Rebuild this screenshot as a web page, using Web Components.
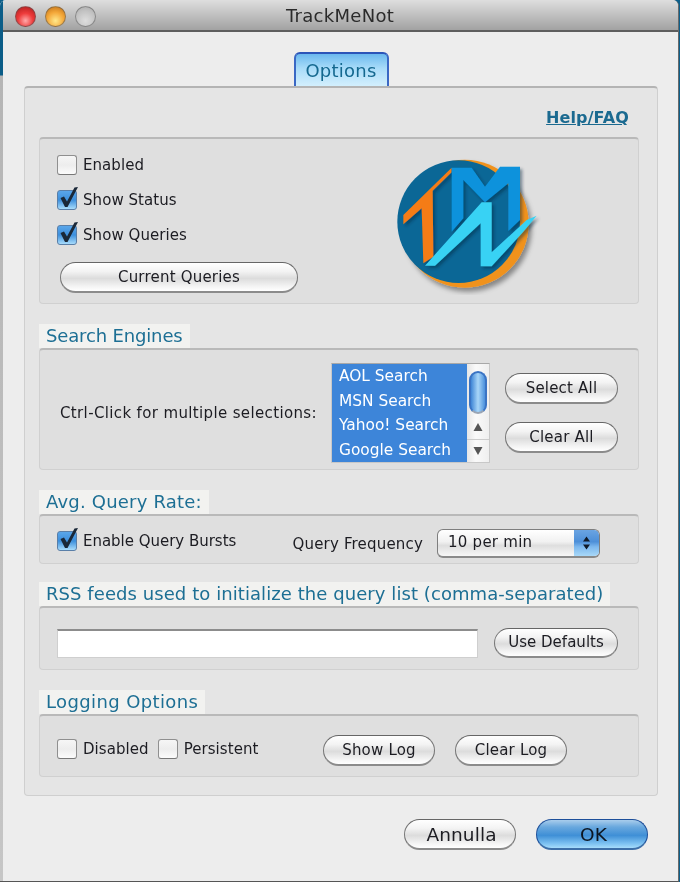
<!DOCTYPE html>
<html><head><meta charset="utf-8">
<style>
html,body{margin:0;padding:0;width:680px;height:882px;overflow:hidden;background:#0d5f8a}
body{font-family:"DejaVu Sans",sans-serif;color:#1c1c22}
</style></head><body>
<tm-window title="TrackMeNot">
  <tm-tab>Options</tm-tab>
  <tm-panel>
    <tm-help>Help/FAQ</tm-help>
    <tm-group pad="13px 18px 12px 17px">
      <tm-row justify="space-between">
        <tm-stack>
          <tm-check>Enabled</tm-check>
          <tm-check checked>Show Status</tm-check>
          <tm-check checked>Show Queries</tm-check>
          <tm-button width="238" style="margin:3px 0 0 3px">Current Queries</tm-button>
        </tm-stack>
        <tm-logo></tm-logo>
      </tm-row>
    </tm-group>
    <tm-group label="Search Engines" ls="-.15" pad="13px 20px 6px 20px" gap="20">
      <tm-row justify="space-between">
        <tm-text style="letter-spacing:.36px">Ctrl-Click for multiple selections:</tm-text>
        <tm-row gap="15">
          <tm-listbox>
            <tm-option>AOL Search</tm-option>
            <tm-option>MSN Search</tm-option>
            <tm-option>Yahoo! Search</tm-option>
            <tm-option>Google Search</tm-option>
          </tm-listbox>
          <tm-stack gap="18">
            <tm-button width="113">Select All</tm-button>
            <tm-button width="113">Clear All</tm-button>
          </tm-stack>
        </tm-row>
      </tm-row>
    </tm-group>
    <tm-group label="Avg. Query Rate:" ls=".2" pad="13px 38px 6px 17px" gap="20">
      <tm-row justify="space-between">
        <tm-check checked style="align-self:flex-start;margin-top:1px;letter-spacing:-.02px">Enable Query Bursts</tm-check>
        <tm-row gap="14">
          <tm-text style="letter-spacing:.18px">Query Frequency</tm-text>
          <tm-select>10 per min</tm-select>
        </tm-row>
      </tm-row>
    </tm-group>
    <tm-group label="RSS feeds used to initialize the query list (comma-separated)" ls=".07" pad="20px 20px 13px 17px" gap="18">
      <tm-row gap="16">
        <tm-input></tm-input>
        <tm-button width="124" style="height:30px;line-height:27px;letter-spacing:.02px">Use Defaults</tm-button>
      </tm-row>
    </tm-group>
    <tm-group label="Logging Options" ls=".38" pad="19px 18px 13px 17px" gap="20">
      <tm-row justify="space-between" style="width:510px">
        <tm-row gap="9" style="margin-bottom:3px">
          <tm-check>Disabled</tm-check>
          <tm-check>Persistent</tm-check>
        </tm-row>
        <tm-row gap="20">
          <tm-button width="112">Show Log</tm-button>
          <tm-button width="112">Clear Log</tm-button>
        </tm-row>
      </tm-row>
    </tm-group>
  </tm-panel>
  <tm-row slot="footer" gap="20">
    <tm-button width="112" size="big">Annulla</tm-button>
    <tm-button width="112" size="big" primary>OK</tm-button>
  </tm-row>
</tm-window>

<script>
function def(name, css, html){
  customElements.define(name, class extends HTMLElement{
    constructor(){super();this.attachShadow({mode:'open'});}
    connectedCallback(){
      const h = typeof html==='function'?html(this):html;
      this.shadowRoot.innerHTML='<style>'+css+'</style>'+h;
    }
  });
}
def('tm-window',`
  :host{display:flex;flex-direction:column;width:678px;height:881px;background:#ededed;border-right:1px solid #6a6a6a;border-bottom:1px solid #555;position:relative;border-radius:6px 6px 0 0;overflow:hidden;filter:blur(.35px)}
  .bar{flex:none;height:30px;display:flex;align-items:center;background:linear-gradient(#dedede,#c9c9c9 35%,#a2a2a2);border-bottom:2px solid #5e5e5e;position:relative}
  .dots{display:flex;gap:9px;padding:2px 0 0 15px;align-items:center}
  .dot{width:21px;height:21px;border-radius:50%;box-sizing:border-box;border:1px solid rgba(90,90,90,.55)}
  .r{background:radial-gradient(circle at 50% 72%,#ffa9a9 0,#ee3b3b 45%,#a81a1a 100%)}
  .o{background:radial-gradient(circle at 50% 72%,#ffe88c 0,#f4a83a 50%,#bd6c12 100%)}
  .g{background:radial-gradient(circle at 50% 72%,#dedede 0,#c2c2c2 60%,#a8a8a8 100%)}
  .t{position:absolute;left:0;right:0;text-align:center;font-size:18px;color:#2b2b2b;letter-spacing:.3px;top:5px;padding-left:2px}
  .body{flex:1;display:flex;flex-direction:column;align-items:center;padding:20px 20px 0 24px;min-height:0}
  .foot{flex:none;display:flex;justify-content:flex-end;padding:0 30px 31px 0;background:#ededed}
  .edge{position:absolute;left:0;top:0;bottom:0;width:3px;background:linear-gradient(#0b5d88 0,#0b5d88 75px,#b5b5b5 76px,#c6c6c6 100%)}
  ::slotted(tm-panel){align-self:stretch}
`,t=>`<div class="bar"><div class="dots"><div class="dot r"></div><div class="dot o"></div><div class="dot g"></div></div><div class="t">${t.getAttribute('title')}</div></div>
<div class="body"><slot></slot></div><div class="foot"><slot name="footer"></slot></div><div class="edge"></div>`);

def('tm-tab',`
  :host{display:block;flex:none;width:95px;height:34px;box-sizing:border-box;border:2px solid #3a68c4;border-bottom:0;border-radius:6px 6px 0 0;background:linear-gradient(#6bb9ee,#a9dcf9 45%,#d3effd);color:#14688f;font-size:18px;text-align:center;line-height:33px;letter-spacing:.25px;border-top-color:#2b55b8}
`,`<slot></slot>`);

def('tm-panel',`
  :host{display:flex;flex-direction:column;box-sizing:border-box;height:711px;background:#e5e5e5;border:1px solid #cfcfcf;border-top:2px solid #b4b4b4;border-radius:4px;padding:0 18px 0 14px;margin-bottom:23px}
`,`<slot></slot>`);

def('tm-help',`
  :host{display:block;text-align:right;font-size:16px;font-weight:700;color:#1b6a90;text-decoration:underline;padding:20px 10px 0 0;height:29px;letter-spacing:.1px;line-height:19px}
`,`<slot></slot>`);

def('tm-group',`
  :host{display:block;flex:none}
  .lab{display:inline-block;vertical-align:top;height:24px;line-height:24px;padding:0 7px;background:#f2f2f0;color:#1d6f94;font-size:18px;white-space:nowrap}
  .head{height:24px}
  .box{box-sizing:border-box;background:#dfdfdf;border:1px solid #d0d0d0;border-top:2px solid #b9b9b9;border-radius:4px}
`,t=>{
  const l=t.getAttribute('label');
  const m=+(t.getAttribute('gap')||0);
  const hts={'Search Engines':122,'Avg. Query Rate:':50,'Logging Options':63};
  const h=l? (l.startsWith('RSS')?64:hts[l]) : 167;
  return `<div style="margin-top:${m}px">${l?`<div class="head"><span class="lab" style="letter-spacing:${t.getAttribute('ls')}px">${l}</span></div>`:''}<div class="box" style="height:${h}px;padding:${t.getAttribute('pad')}"><slot></slot></div></div>`;
});

def('tm-row',`:host{display:flex;align-items:center}`,t=>{
  t.style.gap=(t.getAttribute('gap')||0)+'px';
  if(t.getAttribute('justify'))t.style.justifyContent=t.getAttribute('justify');
  return `<slot></slot>`;
});
def('tm-stack',`:host{display:flex;flex-direction:column;align-items:flex-start;gap:14px}`,t=>{
  if(t.getAttribute('gap'))t.style.gap=t.getAttribute('gap')+'px';
  return `<slot></slot>`;
});
def('tm-text',`:host{display:block;font-size:15px;letter-spacing:.12px;color:#1c1c22;white-space:nowrap;line-height:20px}`,`<slot></slot>`);

def('tm-check',`
  :host{display:flex;align-items:center;gap:6px;font-size:15px;letter-spacing:.06px;white-space:nowrap;height:21px}
  .b{width:20px;height:20px;box-sizing:border-box;border:1px solid #8f8f8f;border-bottom-color:#777;border-radius:3px;background:linear-gradient(#f6f6f6,#ededed 50%,#fbfbfb);position:relative;flex:none}
  .on{border-color:#5a7fa8;background:linear-gradient(#5aa6ea,#3d8fdc 50%,#a8dcfb)}
  svg{position:absolute;left:0;top:-5px}
`,t=>`<div class="b ${t.hasAttribute('checked')?'on':''}">${t.hasAttribute('checked')?'<svg width="21" height="23" viewBox="0 0 21 23"><path d="M2.5 12 L6 10.5 L9 15.5 L16.5 1.5 L20 1 L9.5 21 L7 21 Z" fill="#1a2838"/></svg>':''}</div><slot></slot>`);

def('tm-button',`
  :host{display:block;box-sizing:border-box;flex:none;text-align:center;white-space:nowrap;color:#1c1c22;font-size:15px;letter-spacing:.2px;border:1.5px solid #777;border-top-color:#666;border-bottom:2px solid #8b8b8b;border-radius:16px;height:31px;line-height:28px;background:linear-gradient(#ffffff 0,#f3f3f3 30%,#dcdcdc 55%,#f5f5f5 85%,#ffffff 100%)}
  :host([size=big]){font-size:18.5px;height:31px;line-height:29px;letter-spacing:.1px;padding-left:3px}
  :host([primary]){border-color:#1d4f9a;border-bottom-color:#3d6fa8;background:linear-gradient(#a9cdec 0,#69a8de 25%,#3f8fd6 55%,#7fc3f2 85%,#a6dcfb 100%);color:#0c1520}
`,t=>{t.style.width=t.getAttribute('width')+'px';return `<slot></slot>`;});

def('tm-listbox',`
  :host{display:flex;width:159px;height:100px;box-sizing:border-box;background:#fff;border:1px solid #c8c8c8;border-top-color:#a8a8a8}
  .list{width:135px;background:#3d85d9;display:flex;flex-direction:column}
  .sb{flex:1;display:flex;flex-direction:column;align-items:center;background:linear-gradient(90deg,#e6e6e6,#fafafa 40%,#efefef)}
  .th{margin-top:7px;width:18px;height:44px;box-sizing:border-box;border-radius:9px;border:2px solid #3a74c4;border-bottom:2px solid #9aa5b5;background:linear-gradient(90deg,#3f86d6,#a8d6f8 50%,#4a90dc)}
  .ar{height:24px;width:100%;display:flex;align-items:center;justify-content:center;box-sizing:border-box}
  .ar+.ar{border-top:1px solid #ccc}
  .sp{height:2px}
`,`<div class="list"><slot></slot></div><div class="sb"><div class="th"></div><div class="sp"></div>
<div class="ar"><svg width="10" height="10"><path d="M5 1 L9.5 9 H.5Z" fill="#555"/></svg></div><div class="ar"><svg width="10" height="10"><path d="M.5 1 H9.5 L5 9Z" fill="#555"/></svg></div></div>`);
def('tm-option',`:host{display:block;height:24.7px;line-height:24px;padding-left:7px;color:#fff;font-size:15.4px;white-space:nowrap}`,`<slot></slot>`);

def('tm-select',`
  :host{display:flex;width:163px;height:29px;box-sizing:border-box;border:1.5px solid #7e7e7e;border-bottom:2px solid #8a8a8a;border-radius:6px;overflow:hidden;font-size:15px;letter-spacing:.25px;background:linear-gradient(#fff,#f1f1f1 45%,#dedede 60%,#f7f7f7)}
  .v{flex:1;padding-left:10px;line-height:25px}
  .s{width:25px;display:flex;align-items:center;justify-content:center;background:linear-gradient(#6aa4e2,#4d8fd8 45%,#7db8ee 65%,#a8d8f8)}
`,`<div class="v"><slot></slot></div><div class="s"><svg width="9" height="16"><path d="M4.5 1.5 L8 6.5 H1Z M1 9.5 H8 L4.5 14.5Z" fill="#101a28"/></svg></div>`);

def('tm-input',`:host{display:block;width:421px;height:29px;box-sizing:border-box;background:#fff;border:1px solid #cfcfcf;border-top:2px solid #8c8c8c}`,``);

def('tm-logo',`:host{display:block;width:155px;height:140px;flex:none;align-self:flex-start;margin:3px 75px 0 0}`,`
<svg width="155" height="140" viewBox="0 0 465 420" xmlns="http://www.w3.org/2000/svg">
<defs><filter id="s" x="-20%" y="-20%" width="140%" height="140%"><feDropShadow dx="9" dy="12" stdDeviation="8" flood-color="#000" flood-opacity=".4"/></filter>
<filter id="p" x="-20%" y="-20%" width="140%" height="140%"><feDropShadow dx="7" dy="7" stdDeviation="5" flood-color="#00263c" flood-opacity=".45"/></filter></defs>
<circle cx="224" cy="206" r="192" fill="#f0921e" filter="url(#s)"/>
<circle cx="206" cy="200" r="184" fill="#0b6796"/>
<path d="M185 38 L40 180 L40 208 L95 160 L100 325 L130 305 L128 107 L185 52Z" fill="#f57c14" filter="url(#p)"/>
<path d="M185 38 H245 L285 95 L330 35 H390 V195 L355 228 V85 L285 142 L220 75 V190 L185 230Z" fill="#0b92dc" filter="url(#p)"/>
<path d="M105 332 L275 142 H305 V292 L410 195 L440 182 L400 230 L305 334 H272 V205 L135 332Z" fill="#38d2f4" filter="url(#p)"/>
</svg>`);
</script>
</body></html>
